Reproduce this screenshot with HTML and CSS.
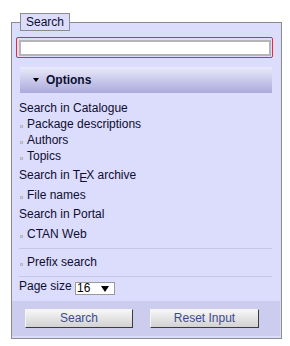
FILE: index.html
```html
<!DOCTYPE html>
<html lang="en">
<head>
  <meta charset="UTF-8">
  <meta name="viewport" content="width=device-width, initial-scale=1.0">
  <link rel="stylesheet" href="styles.css">
  <title>Search</title>
</head>
<body>
  <form class="search-form">
    <fieldset class="search-box">
      <legend>Search</legend>
      <div class="search-body">
        <div class="query">
          <input type="text" class="query-input">
        </div>
        <div class="options-head"><span class="caret"></span>Options</div>

        <div class="group first">
          <div class="group-title">Search in Catalogue</div>
          <label class="opt"><span class="box"></span>Package descriptions</label>
          <label class="opt"><span class="box"></span>Authors</label>
          <label class="opt"><span class="box"></span>Topics</label>
        </div>
        <div class="group">
          <div class="group-title">Search in <span class="tex">T<span class="tex-e">E</span>X</span> archive</div>
          <label class="opt"><span class="box"></span>File names</label>
        </div>
        <div class="group">
          <div class="group-title">Search in Portal</div>
          <label class="opt"><span class="box"></span>CTAN Web</label>
        </div>

        <div class="sep"></div>
        <label class="opt"><span class="box"></span>Prefix search</label>
        <div class="sep sep-last"></div>

        <div class="page-size">
          Page size
          <span class="select">
            <select>
              <option>16</option>
              <option>32</option>
              <option>64</option>
            </select>
          </span>
        </div>
      </div>
      <div class="actions">
        <button type="submit" class="btn btn-search">Search</button>
        <button type="reset" class="btn btn-reset">Reset Input</button>
      </div>
    </fieldset>
  </form>
</body>
</html>
```

FILE: styles.css
```css
:root {
  --panel-color: #dcdcfc;
  --panel-dark: #ccccee;
  --border-color: #8c8c8c;
  --text-color: #0e0e30;
}

body {
  background-color: #ffffff;
  color: var(--text-color);
  font-family: "Liberation Sans", Arial, sans-serif;
  font-size: 12px;
  margin: 0px;
  padding: 0px;
}

.search-form {
  padding: 13px 8px 0px 11px;
}

.search-box {
  background-color: var(--panel-color);
  border: 1px solid var(--border-color);
  margin: 0px;
  min-width: 0px;
  padding: 0px 1px 2px 0px;
}

.search-box > legend {
  background-color: var(--panel-color);
  border: 1px solid var(--border-color);
  line-height: 16px;
  margin-left: 8px;
  padding: 0px 5px;
}

.search-body {
  padding: 6px 8px 6px 7px;
}

.query {
  border: 1px solid #f02828;
  border-radius: 2px;
  margin: 0px -1px 0px -3px;
  padding: 2px 1px 1px 2px;
}

.query-input {
  background-color: #ffffff;
  border: 2px solid #b4b4b4;
  box-sizing: border-box;
  display: block;
  height: 16px;
  margin: 0px;
  outline: none;
  padding: 0px 2px;
  width: 100%;
}

.options-head {
  background: linear-gradient(#eaeafa, #aaaadc);
  font-weight: bold;
  line-height: 26px;
  margin: 9px 0px 0px 1px;
  padding-left: 13px;
}

.caret {
  border-left: 3px solid transparent;
  border-right: 3px solid transparent;
  border-top: 4px solid #000000;
  display: inline-block;
  height: 0px;
  margin-right: 7px;
  vertical-align: 2px;
  width: 0px;
}

.group {
  margin-top: 3px;
}

.group.first {
  margin-top: 7px;
}

.group-title {
  line-height: 16px;
  margin-bottom: 4px;
}

.group.first .group-title {
  margin-bottom: 0px;
}

.opt {
  display: block;
  line-height: 16px;
}

.box {
  background-color: #d0d0d8;
  border: 1px solid #b8b8c4;
  display: inline-block;
  height: 1px;
  margin: 0px 4px 0px 1px;
  vertical-align: 0px;
  width: 1px;
}

.tex-e {
  line-height: 0px;
  margin: 0px -1px;
  vertical-align: -3px;
}

.sep {
  border-top: 1px solid #c6c6e6;
  margin: 6px 0px 5px 0px;
}

.sep-last {
  margin: 6px 0px 1px 0px;
}

.page-size {
  line-height: 16px;
}

.select {
  display: inline-block;
  position: relative;
  vertical-align: -2px;
}

.select > select {
  appearance: none;
  background-color: #ffffff;
  border: 1px solid #9a9a9a;
  border-radius: 0px;
  color: #000000;
  display: block;
  font-family: inherit;
  font-size: 12px;
  height: 13px;
  line-height: 11px;
  margin: 0px;
  padding: 0px 0px 0px 1px;
  width: 40px;
}

.select::after {
  content: "";
  border-left: 4px solid transparent;
  border-right: 4px solid transparent;
  border-top: 6px solid #000000;
  position: absolute;
  right: 6px;
  top: 4px;
}

.actions {
  background-color: var(--panel-dark);
  box-sizing: border-box;
  display: flex;
  gap: 17px;
  height: 35px;
  padding: 8px 0px 0px 13px;
}

.btn {
  background: linear-gradient(#f6f6f6, #d2d2d2);
  border-bottom: 1px solid #3c3c3c;
  border-left: 1px solid #f4f4f4;
  border-right: 1px solid #3c3c3c;
  border-top: 1px solid #f4f4f4;
  color: #3c4c8c;
  font-family: inherit;
  font-size: 12px;
  height: 19px;
  line-height: 15px;
  margin: 0px;
  padding: 0px;
}

.btn-search {
  width: 108px;
}

.btn-reset {
  width: 109px;
}
```
